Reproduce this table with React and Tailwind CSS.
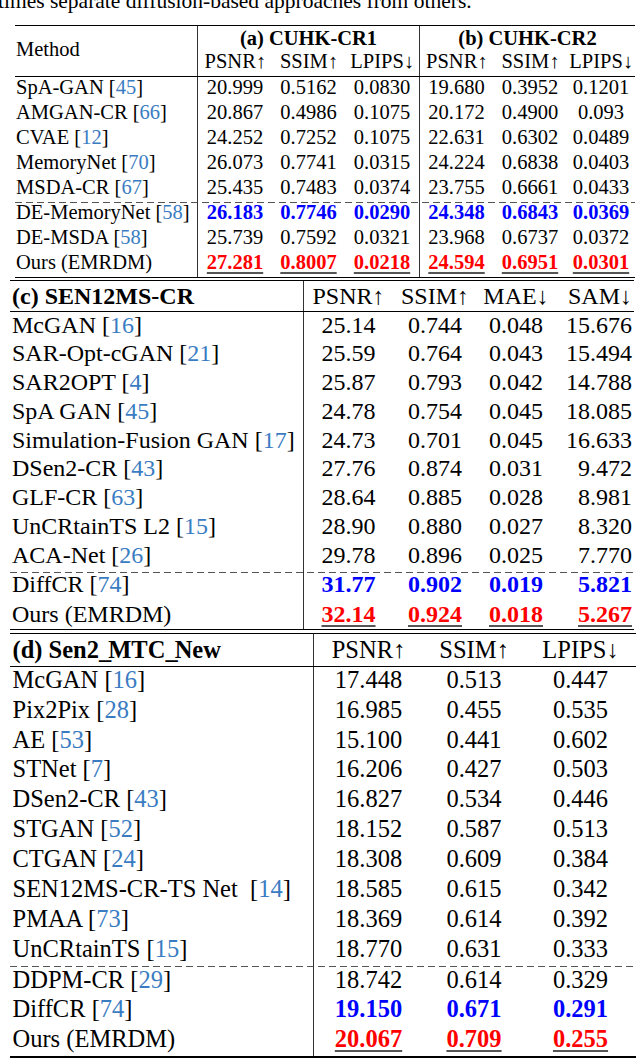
import clsx from 'clsx'

const SERIF = "font-[family-name:'Liberation_Serif','Times_New_Roman',serif]"
const DASH =
  'bg-[image:repeating-linear-gradient(90deg,#555_0_7px,transparent_7px_11px)] bg-no-repeat bg-[length:100%_1px]'

const tableA = [
  ['SpA-GAN', '45', ['20.999', '0.5162', '0.0830', '19.680', '0.3952', '0.1201']],
  ['AMGAN-CR', '66', ['20.867', '0.4986', '0.1075', '20.172', '0.4900', '0.093']],
  ['CVAE', '12', ['24.252', '0.7252', '0.1075', '22.631', '0.6302', '0.0489']],
  ['MemoryNet', '70', ['26.073', '0.7741', '0.0315', '24.224', '0.6838', '0.0403']],
  ['MSDA-CR', '67', ['25.435', '0.7483', '0.0374', '23.755', '0.6661', '0.0433']],
  ['DE-MemoryNet', '58', ['26.183', '0.7746', '0.0290', '24.348', '0.6843', '0.0369'], 'blue', true],
  ['DE-MSDA', '58', ['25.739', '0.7592', '0.0321', '23.968', '0.6737', '0.0372']],
  ['Ours (EMRDM)', null, ['27.281', '0.8007', '0.0218', '24.594', '0.6951', '0.0301'], 'red'],
]

const tableC = [
  ['McGAN', '16', ['25.14', '0.744', '0.048', '15.676']],
  ['SAR-Opt-cGAN', '21', ['25.59', '0.764', '0.043', '15.494']],
  ['SAR2OPT', '4', ['25.87', '0.793', '0.042', '14.788']],
  ['SpA GAN', '45', ['24.78', '0.754', '0.045', '18.085']],
  ['Simulation-Fusion GAN', '17', ['24.73', '0.701', '0.045', '16.633']],
  ['DSen2-CR', '43', ['27.76', '0.874', '0.031', '9.472']],
  ['GLF-CR', '63', ['28.64', '0.885', '0.028', '8.981']],
  ['UnCRtainTS L2', '15', ['28.90', '0.880', '0.027', '8.320']],
  ['ACA-Net', '26', ['29.78', '0.896', '0.025', '7.770']],
]

const tableD = [
  ['McGAN', '16', ['17.448', '0.513', '0.447']],
  ['Pix2Pix', '28', ['16.985', '0.455', '0.535']],
  ['AE', '53', ['15.100', '0.441', '0.602']],
  ['STNet', '7', ['16.206', '0.427', '0.503']],
  ['DSen2-CR', '43', ['16.827', '0.534', '0.446']],
  ['STGAN', '52', ['18.152', '0.587', '0.513']],
  ['CTGAN', '24', ['18.308', '0.609', '0.384']],
  ['SEN12MS-CR-TS Net\u00a0', '14', ['18.585', '0.615', '0.342']],
  ['PMAA', '73', ['18.369', '0.614', '0.392']],
  ['UnCRtainTS', '15', ['18.770', '0.631', '0.333']],
]

function Method({ name, cite }) {
  return (
    <>
      {name}
      {cite && (
        <>
          {' '}[<span className="text-[#3a7cc2]">{cite}</span>]
        </>
      )}
    </>
  )
}

function Val({ v, hl }) {
  if (hl === 'blue') return <span className="font-bold text-[#0000ff]">{v}</span>
  if (hl === 'red')
    return (
      <span className="font-bold text-[#ff0000] underline decoration-[#555] decoration-2 underline-offset-[3px]">
        {v}
      </span>
    )
  return v
}

// one table line: cells stretch to the row height so the vertical rules stay unbroken
function Line({ cells, widths, aligns, borders, h, pad, className }) {
  return (
    <div className={clsx('flex', h, className)}>
      {cells.map((c, i) => (
        <div
          key={i}
          className={clsx(
            'whitespace-nowrap',
            widths[i],
            aligns[i],
            pad,
            borders.includes(i) && 'border-l border-[#333]'
          )}
        >
          {c}
        </div>
      ))}
    </div>
  )
}

const wA = ['w-[182px]', 'w-[75px]', 'w-[73px]', 'w-[74px]', 'w-[74px]', 'w-[74px]', 'w-[68px]']
const aA = ['text-left pl-px', 'text-center', 'text-center', 'text-center', 'text-center', 'text-center', 'text-center']

const wC = ['w-[293px]', 'w-[90px]', 'w-[84px]', 'w-[78px]', 'w-[79px]']
const aC = ['text-left pl-[2px]', 'text-center', 'text-center', 'text-center', 'text-right pr-[2px]']

const wD = ['w-[303px]', 'w-[110px]', 'w-[102px]', 'w-[111px]']
const aD = ['text-left pl-[2.5px]', 'text-center', 'text-center', 'text-center']

function TableA() {
  return (
    <div className="ml-[15px] w-[620px] text-[20.5px] leading-[20px]">
      <div className="h-[1.5px] bg-black" />
      <div className="flex h-[49.5px]">
        <div className="w-[182px] pl-px pt-[13px]">Method</div>
        <div className="w-[222px] border-l border-[#333]">
          <div className="h-[20.5px] pt-[1.5px] text-center font-bold">(a) CUHK-CR1</div>
          <div className="flex h-[29px] pt-[4px]">
            <div className="w-[75px] text-center">PSNR↑</div>
            <div className="w-[73px] text-center">SSIM↑</div>
            <div className="w-[74px] text-center">LPIPS↓</div>
          </div>
        </div>
        <div className="w-[216px] border-l border-[#333]">
          <div className="h-[20.5px] pt-[1.5px] text-center font-bold">(b) CUHK-CR2</div>
          <div className="flex h-[29px] pt-[4px]">
            <div className="w-[74px] text-center">PSNR↑</div>
            <div className="w-[74px] text-center">SSIM↑</div>
            <div className="w-[68px] text-center">LPIPS↓</div>
          </div>
        </div>
      </div>
      <div className="h-px bg-black" />
      {tableA.map(([name, cite, vals, hl, dashed]) => (
        <Line
          key={name}
          h="h-[25px]"
          className={dashed && clsx(DASH, 'bg-top')}
          widths={wA}
          aligns={aA}
          borders={[1, 4]}
          cells={[<Method name={name} cite={cite} />, ...vals.map(v => <Val v={v} hl={hl} />)]}
        />
      ))}
      <div className="h-px bg-black" />
    </div>
  )
}

function TableC() {
  return (
    <div className="ml-[10px] w-[624px] text-[24px] leading-[26px]">
      <div className="mt-[2.5px] h-px bg-black" />
      <Line
        h="h-[29.5px]"
        pad="pt-[2px]"
        widths={wC}
        aligns={aC}
        borders={[1]}
        cells={[<span className="font-bold">(c) SEN12MS-CR</span>, 'PSNR↑', 'SSIM↑', 'MAE↓', 'SAM↓']}
      />
      <div className="h-px bg-black" />
      {tableC.map(([name, cite, vals]) => (
        <Line
          key={name}
          h="h-[28.75px]"
          widths={wC}
          aligns={aC}
          borders={[1]}
          cells={[<Method name={name} cite={cite} />, ...vals]}
        />
      ))}
      <Line
        h="h-[31px]"
        pad="pt-[1px]"
        className={clsx(DASH, 'bg-[position:0_2px]')}
        widths={wC}
        aligns={aC}
        borders={[1]}
        cells={[<Method name="DiffCR" cite="74" />, ...['31.77', '0.902', '0.019', '5.821'].map(v => <Val v={v} hl="blue" />)]}
      />
      <Line
        h="h-[28px]"
        widths={wC}
        aligns={aC}
        borders={[1]}
        cells={[<Method name="Ours (EMRDM)" />, ...['32.14', '0.924', '0.018', '5.267'].map(v => <Val v={v} hl="red" />)]}
      />
      <div className="h-px bg-black" />
    </div>
  )
}

function TableD() {
  const us = <span className="tracking-[-3px]">_</span>
  return (
    <div className="ml-[10px] w-[626px] text-[24.5px] leading-[26px]">
      <div className="mt-[2.5px] h-px bg-black" />
      <Line
        h="h-[32px]"
        pad="pt-[3px]"
        widths={wD}
        aligns={aD}
        borders={[1]}
        cells={[
          <span className="font-bold">
            (d) Sen2{us}MTC{us}New
          </span>,
          'PSNR↑',
          'SSIM↑',
          'LPIPS↓',
        ]}
      />
      <div className="h-px bg-black" />
      {tableD.map(([name, cite, vals]) => (
        <Line
          key={name}
          h="h-[29.9px]"
          widths={wD}
          aligns={aD}
          borders={[1]}
          cells={[<Method name={name} cite={cite} />, ...vals]}
        />
      ))}
      <Line
        h="h-[30.5px]"
        pad="pt-[1px]"
        className={clsx(DASH, 'bg-top')}
        widths={wD}
        aligns={aD}
        borders={[1]}
        cells={[<Method name="DDPM-CR" cite="29" />, '18.742', '0.614', '0.329']}
      />
      <Line
        h="h-[30px]"
        widths={wD}
        aligns={aD}
        borders={[1]}
        cells={[<Method name="DiffCR" cite="74" />, ...['19.150', '0.671', '0.291'].map(v => <Val v={v} hl="blue" />)]}
      />
      <Line
        h="h-[30px]"
        widths={wD}
        aligns={aD}
        borders={[1]}
        cells={[<Method name="Ours (EMRDM)" />, ...['20.067', '0.709', '0.255'].map(v => <Val v={v} hl="red" />)]}
      />
      <div className="h-[1.5px] bg-black" />
    </div>
  )
}

export default function App() {
  return (
    <div className={clsx(SERIF, 'w-[640px] h-[1059px] overflow-hidden bg-white text-black')}>
      <div className="h-[24.5px] overflow-hidden">
        <p className="-mt-[9.5px] -ml-[2px] whitespace-nowrap text-[21.5px] leading-[21.5px]">
          times separate diffusion-based approaches from others.
        </p>
      </div>
      <TableA />
      <TableC />
      <TableD />
    </div>
  )
}
